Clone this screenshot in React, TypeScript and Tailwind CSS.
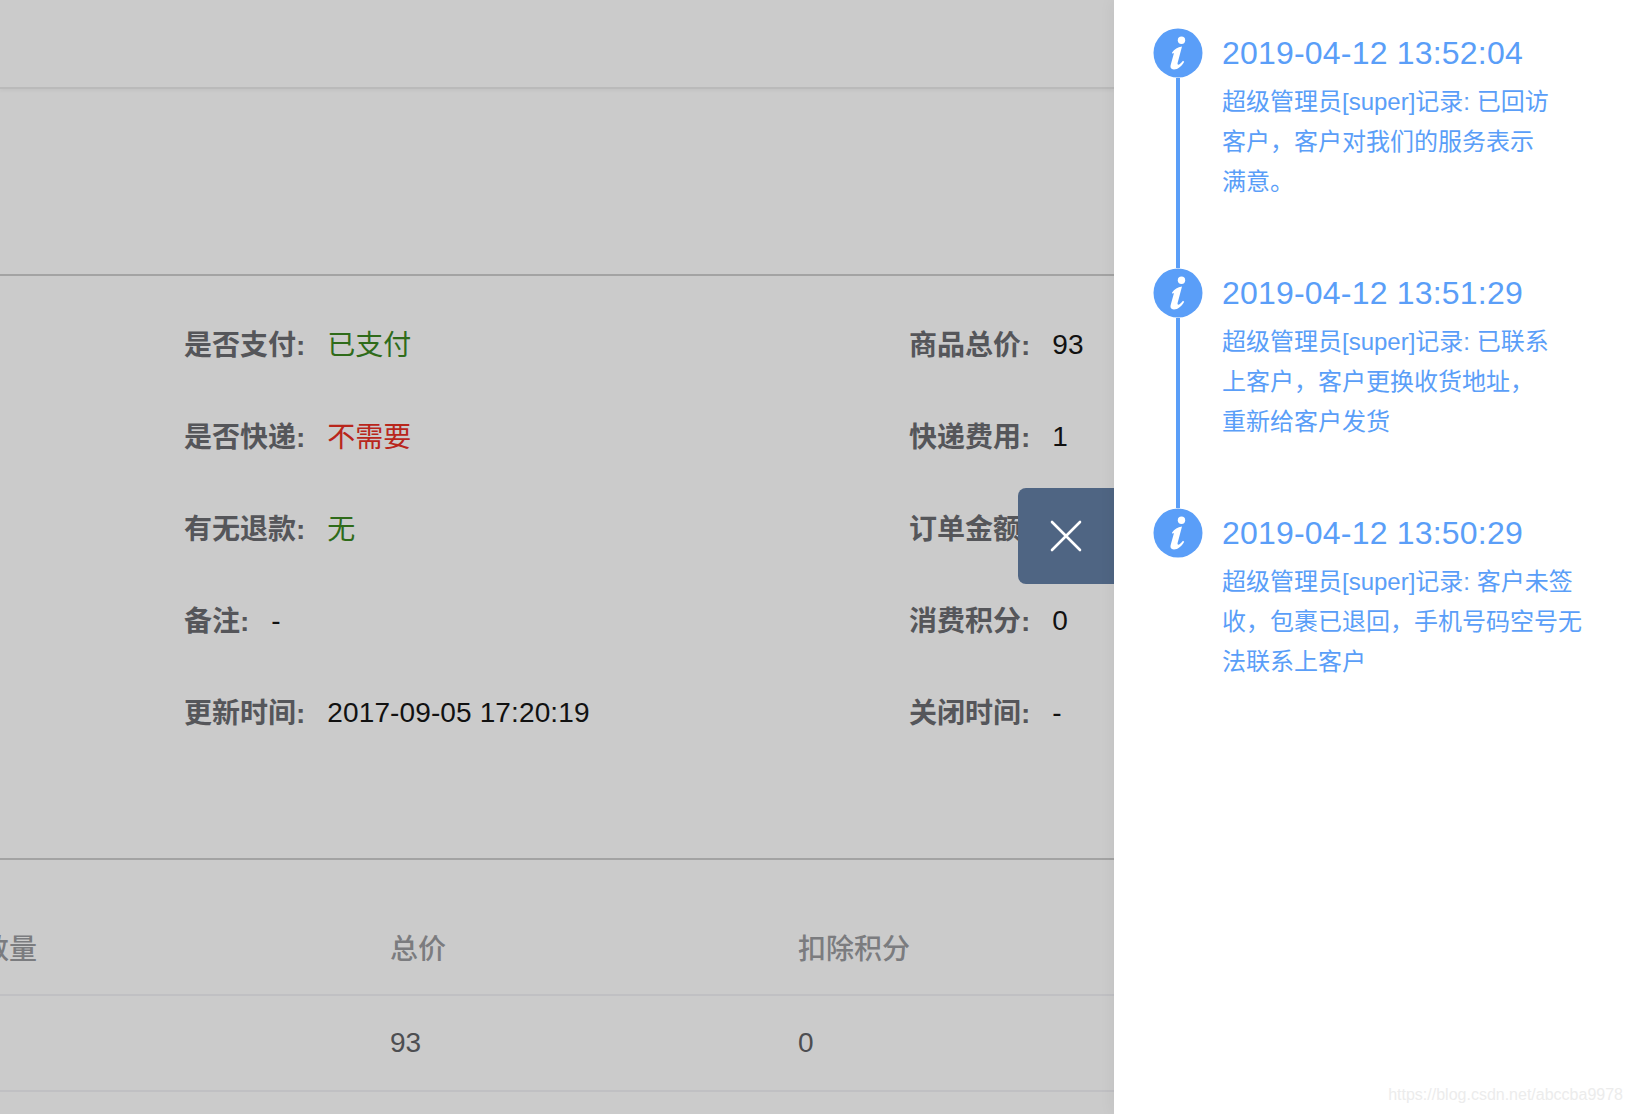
const infoRows = [
  { label: "是否支付:", value: "已支付", color: "text-[#2f6b1a]", label2: "商品总价:", value2: "93" },
  { label: "是否快递:", value: "不需要", color: "text-[#b9261c]", label2: "快递费用:", value2: "1" },
  { label: "有无退款:", value: "无", color: "text-[#2f6b1a]", label2: "订单金额:", value2: "94" },
  { label: "备注:", value: "-", color: "text-[#111111] leading-[90px]", label2: "消费积分:", value2: "0" },
  { label: "更新时间:", value: "2017-09-05 17:20:19", color: "text-[#111111] leading-[90px] tracking-[0.12px]", label2: "关闭时间:", value2: "-" },
];

const logs = [
  {
    time: "2019-04-12 13:52:04",
    lines: ["超级管理员[super]记录: 已回访", "客户，客户对我们的服务表示", "满意。"],
  },
  {
    time: "2019-04-12 13:51:29",
    lines: ["超级管理员[super]记录: 已联系", "上客户，客户更换收货地址，", "重新给客户发货"],
  },
  {
    time: "2019-04-12 13:50:29",
    lines: ["超级管理员[super]记录: 客户未签", "收，包裹已退回，手机号码空号无", "法联系上客户"],
  },
];

function InfoIcon() {
  return (
    <svg viewBox="0 0 50 50" className="h-[50px] w-[50px] shrink-0">
      <circle cx="25" cy="25" r="24.5" fill="#5a9ef8" />
      <circle cx="28.5" cy="12.2" r="3.7" fill="#ffffff" />
      <path
        d="M19 24.500C21.500 21 24.500 19 29 18.500L24.600 35C24.200 36.600 25.400 37.200 26.800 36C28 35 29 34 30 32.800L31.200 33.800C28.500 38.500 25 41.500 21 41.500C17.800 41.500 17 39.500 17.800 36.600L21 25C20.500 25.200 20.200 25.500 19.800 25.900Z"
        fill="#ffffff"
      />
    </svg>
  );
}

export default function App() {
  return (
    <div className="flex h-[1114px] w-[1632px] overflow-hidden bg-white font-['Liberation_Sans','Noto_Sans_CJK_SC',sans-serif]">
      <div className="relative w-[1114px] shrink-0 overflow-hidden bg-[#cbcbcb]">
        <div className="h-[89px] border-b-2 border-[#bababa] shadow-[0_2px_3px_rgba(0,0,0,0.04)]" />

        <div className="h-[187px] border-b-2 border-[#a3a3a3]" />

        <div className="flex h-[584px] flex-col border-b-2 border-[#a3a3a3] pt-[24px] text-[28px] leading-[92px]">
          {infoRows.map((row) => (
            <div key={row.label} className="flex h-[92px] whitespace-nowrap pl-[184px]">
              <div className="flex w-[725px] shrink-0 gap-[22px]">
                <span className="font-semibold text-[#55565a]">{row.label}</span>
                <span className={row.color}>{row.value}</span>
              </div>
              <div className="flex gap-[22px]">
                <span className="font-semibold text-[#55565a]">{row.label2}</span>
                <span className="leading-[90px] text-[#111111]">{row.value2}</span>
              </div>
            </div>
          ))}
        </div>

        <div className="ml-[-19px] grid grid-cols-[409px_408px_1fr] border-b-2 border-[#c0c0c3] text-[28px] font-medium text-[#7b7c7f]">
          <div className="flex h-[134px] items-end whitespace-nowrap pb-[23px] leading-[42px]">数量</div>
          <div className="flex h-[134px] items-end whitespace-nowrap pb-[23px] leading-[42px]">总价</div>
          <div className="flex h-[134px] items-end whitespace-nowrap pb-[23px] leading-[42px]">扣除积分</div>
        </div>
        <div className="ml-[-19px] grid h-[96px] grid-cols-[409px_408px_1fr] items-center border-b-2 border-[#c0c0c3] text-[28px] text-[#4d4e51]">
          <div />
          <div>93</div>
          <div>0</div>
        </div>

        <button className="absolute left-[1018px] top-[488px] flex h-[96px] w-[96px] items-center justify-center rounded-l-[8px] bg-[#4f6583]">
          <svg viewBox="0 0 32 32" className="h-[32px] w-[32px]">
            <path d="M2 2 30 30M30 2 2 30" stroke="#ffffff" strokeWidth="2.600" strokeLinecap="round" fill="none" />
          </svg>
        </button>
      </div>

      <div className="relative flex-1 pl-[39px] pt-[28px] shadow-[0_0_16px_rgba(0,0,0,0.06)]">
        {logs.map((log, i) => (
          <div key={log.time} className="flex h-[240px] gap-[19px]">
            <div className="flex w-[50px] shrink-0 flex-col items-center">
              <InfoIcon />
              {i < logs.length - 1 && <div className="w-[4px] flex-1 bg-[#5a9ef8]" />}
            </div>
            <div className="text-[#5a9ef8]">
              <div className="h-[50px] text-[32px] leading-[50px] tracking-[0.2px]">{log.time}</div>
              <div className="mt-[4px] text-[24px] leading-[40px]">
                {log.lines.map((line) => (
                  <div key={line} className="whitespace-nowrap">
                    {line}
                  </div>
                ))}
              </div>
            </div>
          </div>
        ))}
        <div className="absolute bottom-[9px] right-[9px] text-[16px] leading-[20px] text-[#ececec]">
          https://blog.csdn.net/abccba9978
        </div>
      </div>
    </div>
  );
}
